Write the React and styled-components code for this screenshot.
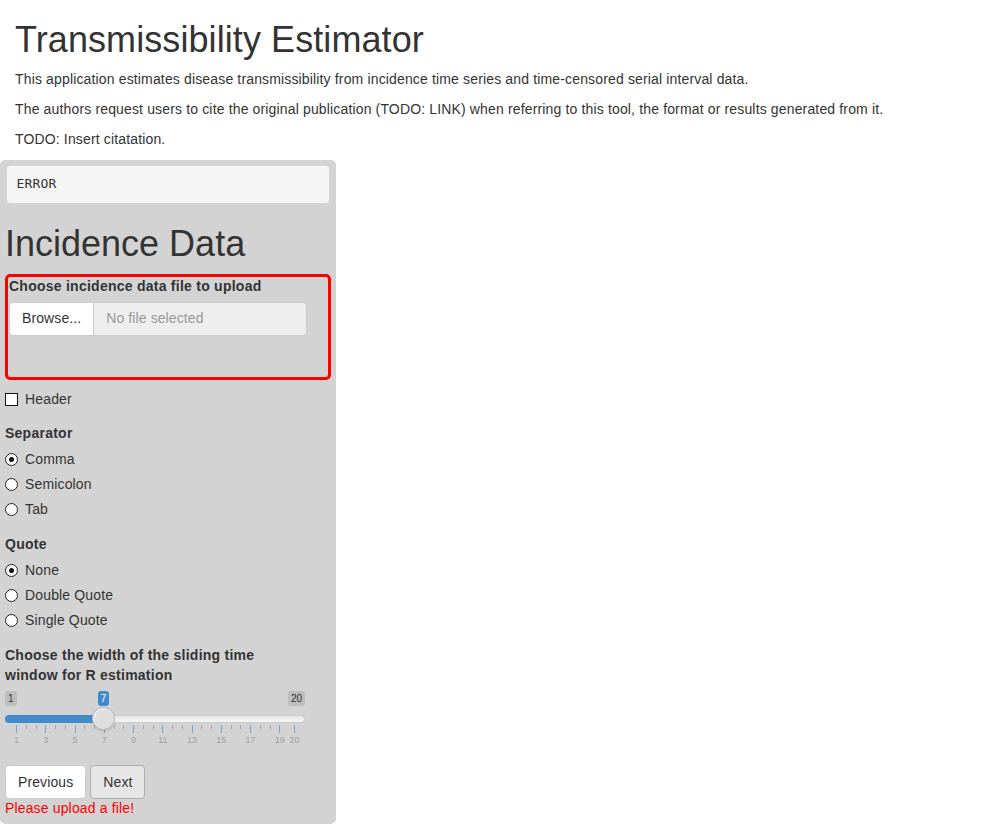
import React from "react";
import styled, { createGlobalStyle } from "styled-components";

const GlobalStyle = createGlobalStyle`
  body {
    margin: 0;
    background: #fff;
    color: #333;
    font-family: "Liberation Sans", Arial, sans-serif;
    font-size: 14px;
    line-height: 1.42857;
    letter-spacing: 0.15px;
  }
`;

const Header = styled.div`
  padding: 0 15px;
`;

const Title = styled.h1`
  font-size: 36px;
  font-weight: 400;
  line-height: 1.1;
  letter-spacing: 0.08px;
  margin: 20px 0 10px;
`;

const Para = styled.p`
  margin: 0 0 10px;
`;

const Sidebar = styled.div`
  width: 326px;
  padding: 5px 5px;
  background: #d3d3d3;
  border-radius: 5px;
`;

const Pre = styled.pre`
  margin: 0 1px 10px;
  padding: 9.5px;
  font-family: "DejaVu Sans Mono", monospace;
  font-size: 13px;
  line-height: 1.42857;
  letter-spacing: 0.2px;
  color: #333;
  background: #f5f5f5;
  border: 1px solid #d6d6d6;
  border-radius: 4px;
`;

const SectionTitle = styled.h1`
  font-size: 36px;
  font-weight: 400;
  line-height: 1.1;
  letter-spacing: 0;
  margin: 20px 0 10px;
`;

const Highlight = styled.div`
  border: 3px solid #ff0000;
  border-radius: 5px;
  padding: 0 1px 41px;
`;

const Label = styled.div`
  font-weight: 700;
  letter-spacing: 0.25px;
  margin-bottom: 5px;
  width: ${(p) => p.$width || "auto"};
`;

const InputGroup = styled.div`
  display: flex;
  width: 298px;
  height: 34px;
`;

const BrowseButton = styled.div`
  display: flex;
  align-items: center;
  padding: 0 12px;
  background: #fff;
  border: 1px solid #ccc;
  border-radius: 4px 0 0 4px;
  color: #333;
  letter-spacing: 0.1px;
`;

const FileField = styled.div`
  flex: 1;
  display: flex;
  align-items: center;
  padding: 0 12px;
  background: #eee;
  border: 1px solid #ccc;
  border-left: none;
  border-radius: 0 4px 4px 0;
  color: #999;
  letter-spacing: 0.1px;
`;

const FormGroup = styled.div`
  margin-top: ${(p) => p.$mt ?? 0}px;
  margin-bottom: ${(p) => p.$mb ?? 15}px;
  display: flex;
  flex-direction: column;
`;

const Options = styled.div`
  display: flex;
  flex-direction: column;
  gap: 5px;
  margin-top: 1px;
`;

const Option = styled.div`
  display: flex;
  align-items: center;
  gap: 7px;
  height: 20px;
`;

const CheckBox = styled.span`
  width: 11px;
  height: 11px;
  border: 1px solid #111;
  background: #fff;
`;

const Radio = styled.span`
  box-sizing: border-box;
  width: 13px;
  height: 13px;
  border: 1px solid #222;
  border-radius: 50%;
  background: #fff;
  display: flex;
  align-items: center;
  justify-content: center;
  &::after {
    content: "";
    width: 5px;
    height: 5px;
    border-radius: 50%;
    background: ${(p) => (p.$checked ? "#111" : "transparent")};
  }
`;

const Slider = styled.div`
  position: relative;
  width: 300px;
  height: 59px;
  margin-bottom: 15px;
  font-size: 10px;
  letter-spacing: 0;
`;

const Badge = styled.span`
  position: absolute;
  top: 0;
  padding: 1px 3px;
  line-height: 1.3;
  border-radius: 3px;
  color: ${(p) => (p.$active ? "#fff" : "#333")};
  background: ${(p) => (p.$active ? "#428bca" : "rgba(0,0,0,0.1)")};
`;

const Track = styled.div`
  position: absolute;
  left: 0;
  right: 0;
  top: 24px;
  height: 6px;
  border: 1px solid #ccc;
  border-radius: 16px;
  background: linear-gradient(to bottom, #dedede -50%, #fff 150%);
`;

const Bar = styled.div`
  position: absolute;
  left: 0;
  top: 24px;
  height: 8px;
  border-radius: 16px 0 0 16px;
  background: #428bca;
`;

const Handle = styled.div`
  position: absolute;
  top: 16px;
  width: 23px;
  height: 23px;
  box-sizing: border-box;
  border: 1px solid #bdbdbd;
  border-radius: 50%;
  background: #dedede;
  box-shadow: 0 1px 2px rgba(0, 0, 0, 0.15), inset 1px 1px 2px rgba(255, 255, 255, 0.6);
`;

const Tick = styled.span`
  position: absolute;
  top: 34px;
  width: 1px;
  height: ${(p) => (p.$big ? 8 : 4)}px;
  background: ${(p) => (p.$big ? "#7aa6d2" : "#a8a8a8")};
`;

const TickText = styled.span`
  position: absolute;
  top: 44px;
  font-size: 9px;
  line-height: 10px;
  color: #a0a0a0;
  transform: translateX(-50%);
`;

const Buttons = styled.div`
  display: flex;
  gap: 4px;
`;

const Button = styled.div`
  padding: 6px 12px;
  border: 1px solid ${(p) => (p.$pressed ? "#adadad" : "#ccc")};
  border-radius: 4px;
  background: ${(p) => (p.$pressed ? "#e6e6e6" : "#fff")};
  color: #333;
  line-height: 20px;
  letter-spacing: 0.1px;
`;

const ErrorText = styled.div`
  color: #ff0000;
`;

const MIN = 1;
const MAX = 20;
const VALUE = 7;
const pos = (v) => 11 + ((v - MIN) / (MAX - MIN)) * 278;

function SlidingWindow() {
  const big = [1, 3, 5, 7, 9, 11, 13, 15, 17, 19];
  const ticks = [];
  big.forEach((v) => {
    ticks.push({ x: pos(v), big: true });
    if (v < 19) {
      ticks.push({ x: pos(v) + (pos(v + 2) - pos(v)) / 3, big: false });
      ticks.push({ x: pos(v) + (2 * (pos(v + 2) - pos(v))) / 3, big: false });
    }
  });
  ticks.push({ x: pos(20), big: true });
  const x = pos(VALUE);
  return (
    <Slider>
      <Badge style={{ left: 0 }}>1</Badge>
      <Badge $active style={{ left: x - 6 }}>7</Badge>
      <Badge style={{ right: 0 }}>20</Badge>
      <Track />
      <Bar style={{ width: x }} />
      {ticks.map((t, i) => (
        <Tick key={i} $big={t.big} style={{ left: Math.round(t.x) }} />
      ))}
      {[...big, 20].map((v) => (
        <TickText key={v} style={{ left: pos(v) + 0.5 }}>{v}</TickText>
      ))}
      <Handle style={{ left: x - 11.5 }} />
    </Slider>
  );
}

function RadioGroup({ title, options, selected }) {
  return (
    <FormGroup>
      <Label>{title}</Label>
      <Options>
        {options.map((o) => (
          <Option key={o}>
            <Radio $checked={o === selected} />
            {o}
          </Option>
        ))}
      </Options>
    </FormGroup>
  );
}

export default function App() {
  return (
    <>
      <GlobalStyle />
      <Header>
        <Title>Transmissibility Estimator</Title>
        <Para>
          This application estimates disease transmissibility from incidence time series and
          time-censored serial interval data.
        </Para>
        <Para>
          The authors request users to cite the original publication (TODO: LINK) when referring
          to this tool, the format or results generated from it.
        </Para>
        <Para>TODO: Insert citatation.</Para>
      </Header>
      <Sidebar>
        <Pre>ERROR</Pre>
        <SectionTitle>Incidence Data</SectionTitle>
        <Highlight>
          <Label>Choose incidence data file to upload</Label>
          <InputGroup>
            <BrowseButton>Browse...</BrowseButton>
            <FileField>No file selected</FileField>
          </InputGroup>
        </Highlight>
        <FormGroup $mt={10} $mb={14}>
          <Option>
            <CheckBox />
            Header
          </Option>
        </FormGroup>
        <RadioGroup title="Separator" options={["Comma", "Semicolon", "Tab"]} selected="Comma" />
        <RadioGroup
          title="Quote"
          options={["None", "Double Quote", "Single Quote"]}
          selected="None"
        />
        <Label $width="300px">Choose the width of the sliding time window for R estimation</Label>
        <SlidingWindow />
        <Buttons>
          <Button>Previous</Button>
          <Button $pressed>Next</Button>
        </Buttons>
        <ErrorText>Please upload a file!</ErrorText>
      </Sidebar>
    </>
  );
}
